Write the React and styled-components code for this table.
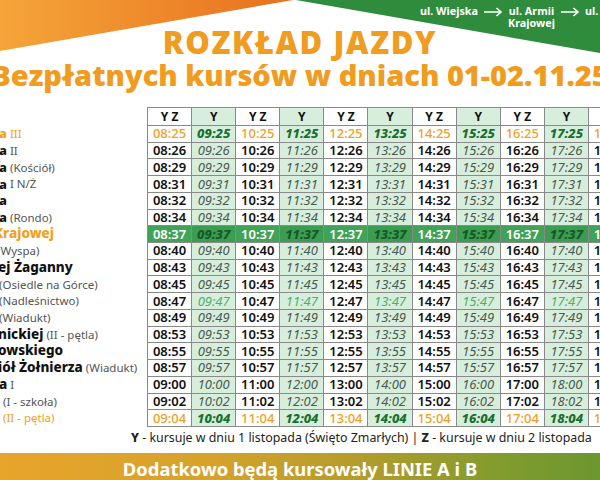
import React from "react";
import styled, { createGlobalStyle } from "styled-components";

const Global = createGlobalStyle`
  html, body { margin: 0; padding: 0; background: #fff; overflow: hidden; }
  body { font-family: "Noto Sans", "Open Sans", sans-serif; }
`;

const Page = styled.div`
  width: 600px;
  height: 480px;
  overflow: hidden;
  background: #fff;
  display: flex;
  flex-direction: column;
`;

const Header = styled.header`
  position: relative;
  height: 107px;
  flex-shrink: 0;
  display: flex;
  flex-direction: column;
  align-items: center;
`;

const Decor = styled.svg`
  position: absolute;
  inset: 0;
  width: 600px;
  height: 107px;
  z-index: 0;
`;

const RouteBar = styled.div`
  position: relative;
  z-index: 1;
  align-self: stretch;
  display: flex;
  justify-content: flex-start;
  align-items: flex-start;
  gap: 5px;
  padding: 5px 0 0 420px;
  height: 24px;
  overflow: hidden;
  color: #fff;
  font-family: "Noto Sans", sans-serif;
  font-weight: 700;
  font-size: 10.8px;
  line-height: 12px;
`;

const Stop = styled.span`
  text-align: center;
  white-space: nowrap;
  flex-shrink: 0;
`;

const ArrowSvg = styled.svg`
  flex-shrink: 0;
  margin-top: 1px;
`;

const Arrow = () => (
  <ArrowSvg width="20" height="12" viewBox="0 0 20 12">
    <path d="M1 6 H18 M13.5 2 L18 6 L13.5 10" stroke="#fff" strokeWidth="1.6" fill="none" />
  </ArrowSvg>
);

const Title = styled.h1`
  position: relative;
  z-index: 1;
  margin: -2px 0 0;
  font-family: "Open Sans", sans-serif;
  font-weight: 800;
  font-size: 31px;
  line-height: 31px;
  letter-spacing: 1.6px;
  color: #f09c1f;
  white-space: nowrap;
`;

const Subtitle = styled.h2`
  position: relative;
  z-index: 1;
  margin: 3px 0 0;
  font-family: "Open Sans", sans-serif;
  font-weight: 800;
  font-size: 29px;
  line-height: 28px;
  color: #f09c1f;
  white-space: nowrap;
`;

const Body = styled.div`
  display: flex;
  align-items: flex-start;
  flex-shrink: 0;
`;

const ROW_TEMPLATE = "17px repeat(18, 15.72px)";

const Names = styled.div`
  width: 147px;
  flex-shrink: 0;
  overflow: hidden;
  display: grid;
  grid-template-rows: ${ROW_TEMPLATE};
  row-gap: 1px;
  padding: 1px 0;
`;

const Name = styled.div`
  display: flex;
  align-items: center;
  white-space: nowrap;
  margin-left: ${(p) => p.$indent || 0}px;
  line-height: 1;
  color: ${(p) => (p.$tone === "orange" ? "#f0a020" : "#111")};
`;

const Bold = styled.span`
  font-family: "Noto Sans", sans-serif;
  font-weight: 800;
  font-size: ${(p) => (p.$big ? 13.5 : 13)}px;
  color: inherit;
`;

const Note = styled.span`
  font-family: "Noto Sans", sans-serif;
  font-weight: 400;
  font-size: 11.5px;
  color: ${(p) => (p.$tone === "orange" ? "#f0a020" : "#555")};
  white-space: pre;
`;

const Grid = styled.div`
  display: grid;
  grid-template-columns: repeat(11, 43.1px);
  grid-template-rows: ${ROW_TEMPLATE};
  gap: 1px;
  padding: 1px;
  background: #8a8a8a;
  flex-shrink: 0;
`;

const HeadCell = styled.div`
  display: flex;
  align-items: center;
  justify-content: center;
  background: ${(p) => (p.$y ? "#d7eedd" : "#fff")};
  font-family: "Noto Sans", sans-serif;
  font-weight: 700;
  font-size: 12px;
  color: #111;
  white-space: pre;
`;

const cellBg = (p) => {
  if (p.$kind === "hl") return p.$y ? "#3b9c52" : "#41a35a";
  return p.$y ? "#d7eedd" : "#fff";
};

const cellColor = (p) => {
  const k = p.$kind;
  if (p.$y) {
    if (k === "edge") return "#17702f";
    if (k === "hl") return "#155a27";
    if (k === "light") return "#4fae6c";
    return "#4b5a50";
  }
  if (k === "edge") return "#f0a020";
  if (k === "hl") return "#fff";
  return "#111";
};

const Cell = styled.div`
  display: flex;
  align-items: center;
  justify-content: center;
  background: ${cellBg};
  color: ${cellColor};
  font-family: "Noto Sans", sans-serif;
  font-size: 13px;
  line-height: 1;
  font-style: ${(p) => (p.$y ? "italic" : "normal")};
  font-weight: ${(p) => {
    if (p.$y) return p.$kind === "edge" || p.$kind === "hl" ? 800 : 400;
    return p.$kind === "edge" ? 500 : 600;
  }};
`;

const Legend = styled.p`
  margin: 4px 0 0;
  padding-left: 131px;
  font-family: "Noto Sans", sans-serif;
  font-size: 12.4px;
  line-height: 14px;
  color: #222;
  white-space: nowrap;
  b { font-weight: 800; }
`;

const Banner = styled.div`
  margin-top: 8px;
  height: 32px;
  flex-shrink: 0;
  display: flex;
  justify-content: center;
  align-items: center;
  padding-bottom: 2px;
  background: linear-gradient(90deg, #e8a42b 0%, #d6a22b 35%, #b39c2b 60%, #7f9b2e 85%, #6b972e 100%);
  color: #fff;
  font-family: "Noto Sans", sans-serif;
  font-weight: 700;
  font-size: 18.4px;
  white-space: nowrap;
`;

const MINUTES = [25, 26, 29, 31, 32, 34, 37, 40, 43, 45, 47, 49, 53, 55, 57, 60, 62, 64];

const NAMES = [
  { b: "a", n: " III", tone: "orange", indent: -1 },
  { b: "a", n: " II", indent: -1 },
  { b: "a", n: " (Kościół)", indent: -1 },
  { b: "a", n: " I N/Ż", indent: -1 },
  { b: "a", indent: -1 },
  { b: "a", n: " (Rondo)", indent: -1 },
  { b: "Krajowej", tone: "orange", big: true, indent: -6 },
  { n: "(Wyspa)", indent: -3 },
  { b: "ej Żaganny", big: true, indent: -2 },
  { n: "(Osiedle na Górce)", indent: -1 },
  { n: "(Nadleśnictwo)", indent: -1 },
  { n: "(Wiadukt)", indent: -1 },
  { b: "nickiej", n: " (II - pętla)", big: true, indent: -2 },
  { b: "owskiego", big: true, indent: -2 },
  { b: "iół Żołnierza", n: " (Wiadukt)", big: true, indent: -2 },
  { b: "a", n: " I", big: true, indent: -1 },
  { n: "(I - szkoła)", indent: 3 },
  { n: "(II - pętla)", tone: "orange", indent: 3 },
];

const pad = (v) => String(v).padStart(2, "0");

const kindOf = (r) => {
  if (r === 0 || r === MINUTES.length - 1) return "edge";
  if (r === 6) return "hl";
  if (r === 10) return "light";
  return "normal";
};

const COLS = Array.from({ length: 11 }, (_, c) => c);

export default function App() {
  return (
    <Page>
      <Global />
      <Header>
        <Decor viewBox="0 0 600 107" preserveAspectRatio="none">
          <defs>
            <linearGradient id="og" x1="0" y1="0" x2="1" y2="0">
              <stop offset="0" stopColor="#f5a53a" />
              <stop offset="1" stopColor="#e8701e" />
            </linearGradient>
          </defs>
          <polygon points="0,0 293,0 0,51" fill="url(#og)" />
          <polygon points="296,0 600,0 600,53" fill="#2e8c3c" />
        </Decor>
        <RouteBar>
          <Stop>ul. Wiejska</Stop>
          <Arrow />
          <Stop>
            ul. Armii
            <br />
            Krajowej
          </Stop>
          <Arrow />
          <Stop>ul. Dworcowa</Stop>
        </RouteBar>
        <Title>ROZKŁAD JAZDY</Title>
        <Subtitle>Bezpłatnych kursów w dniach 01-02.11.25</Subtitle>
      </Header>
      <Body>
        <Names>
          <div />
          {NAMES.map((s, i) => (
            <Name key={i} $tone={s.tone} $indent={s.indent}>
              {s.b && <Bold $big={s.big}>{s.b}</Bold>}
              {s.n && <Note $tone={s.tone}>{s.n}</Note>}
            </Name>
          ))}
        </Names>
        <Grid>
          {COLS.map((c) => (
            <HeadCell key={"h" + c} $y={c % 2 === 1}>
              {c % 2 === 1 ? "Y" : "Y Z"}
            </HeadCell>
          ))}
          {MINUTES.map((m, r) =>
            COLS.map((c) => {
              const h = 8 + c + Math.floor(m / 60);
              return (
                <Cell key={r + "-" + c} $y={c % 2 === 1} $kind={kindOf(r)}>
                  {pad(h)}:{pad(m % 60)}
                </Cell>
              );
            })
          )}
        </Grid>
      </Body>
      <Legend>
        <b>Y</b> - kursuje w dniu 1 listopada (Święto Zmarłych) | <b>Z</b> - kursuje w dniu 2 listopada
      </Legend>
      <Banner>Dodatkowo będą kursowały LINIE A i B</Banner>
    </Page>
  );
}
